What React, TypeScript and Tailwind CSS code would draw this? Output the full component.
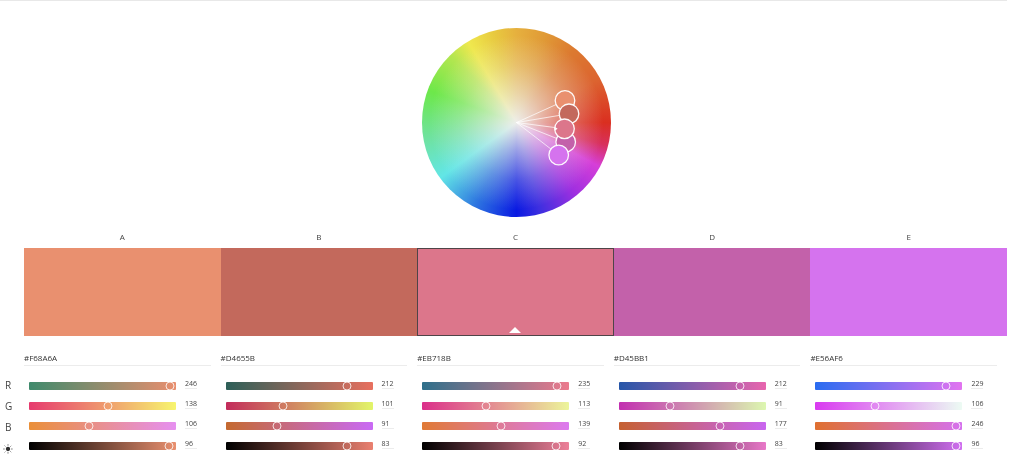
const columns = [
  {
    letter: "A",
    hex: "#F68A6A",
    swatch: "bg-[#e9906f]",
    rows: [
      { value: 246, max: 255, from: "#3f8a6c", to: "#e98f6f" },
      { value: 138, max: 255, from: "#e63a6e", to: "#f7f56e" },
      { value: 106, max: 255, from: "#ea8f38", to: "#e690f0" },
      { value: 96, max: 100, from: "#000000", to: "#e9906f" },
    ],
  },
  {
    letter: "B",
    hex: "#D4655B",
    swatch: "bg-[#c3695c]",
    rows: [
      { value: 212, max: 255, from: "#2d5f58", to: "#e8705f" },
      { value: 101, max: 255, from: "#c22c5b", to: "#e2f56a" },
      { value: 91, max: 255, from: "#c4692f", to: "#c96af5" },
      { value: 83, max: 100, from: "#000000", to: "#ea8070" },
    ],
  },
  {
    letter: "C",
    hex: "#EB718B",
    swatch: "bg-[#dc768b]",
    selected: true,
    rows: [
      { value: 235, max: 255, from: "#2e6f8a", to: "#ec7a8d" },
      { value: 113, max: 255, from: "#db2f8a", to: "#ecf59a" },
      { value: 139, max: 255, from: "#e07a35", to: "#dc7aef" },
      { value: 92, max: 100, from: "#000000", to: "#ed8099" },
    ],
  },
  {
    letter: "D",
    hex: "#D45BB1",
    swatch: "bg-[#c361aa]",
    rows: [
      { value: 212, max: 255, from: "#2656a8", to: "#e865ae" },
      { value: 91, max: 255, from: "#c22fb0", to: "#dcf7b0" },
      { value: 177, max: 255, from: "#c56030", to: "#c966f0" },
      { value: 83, max: 100, from: "#000000", to: "#e878c8" },
    ],
  },
  {
    letter: "E",
    hex: "#E56AF6",
    swatch: "bg-[#d573ee]",
    rows: [
      { value: 229, max: 255, from: "#2a6cf0", to: "#e274f0" },
      { value: 106, max: 255, from: "#d93af0", to: "#ecfbf3" },
      { value: 246, max: 255, from: "#df7030", to: "#d572ee" },
      { value: 96, max: 100, from: "#000000", to: "#d070f0" },
    ],
  },
];

const handles = [
  { x: 143, y: 72.5, fill: "#e9906f" },
  { x: 147, y: 85.8, fill: "#c3695c" },
  { x: 143.7, y: 114, fill: "#c361aa" },
  { x: 142.5, y: 100.8, fill: "#dc768b" },
  { x: 136.7, y: 127, fill: "#d573ee" },
];

function Handles() {
  const c = 94.5;
  return (
    <svg viewBox="0 0 189 189" className="absolute inset-0 h-full w-full">
      {handles.map((h) => (
        <line key={h.fill} x1={c} y1={c} x2={h.x} y2={h.y} stroke="#ffffff" strokeOpacity="0.7" strokeWidth="1" />
      ))}
      {handles.map((h) => (
        <circle
          key={h.fill}
          cx={h.x}
          cy={h.y}
          r="9.8"
          fill={h.fill}
          stroke="#ffffff"
          strokeOpacity="0.95"
          strokeWidth="1.3"
        />
      ))}
      <path d="M132.6 98.8 L135.6 100.8 L132.6 102.8 Z" fill="#ffffff" />
    </svg>
  );
}

function SunIcon() {
  return (
    <svg viewBox="0 0 12 12" className="h-[10px] w-[10px]" fill="none" stroke="#3a3a3a">
      <circle cx="6" cy="6" r="2.6" fill="#2f2f2f" stroke="none" />
      <path
        d="M6 .4v2M6 9.6v2M.4 6h2M9.6 6h2M2 2l1.2 1.2M8.8 8.8L10 10M2 10l1.2-1.2M8.8 3.2L10 2"
        strokeWidth="1"
        strokeDasharray="0.9 0.5"
      />
    </svg>
  );
}

function Slider({ value, max, from, to }: { value: number; max: number; from: string; to: string }) {
  return (
    <div className="flex h-5 items-start pl-[5px]">
      <div
        className="relative h-2 w-[147px] rounded-[1px] shadow-[0_0_0_0.5px_rgba(255,255,255,0.6)]"
        style={{ backgroundImage: `linear-gradient(to right, ${from}, ${to})` }}
      >
        <div
          className="absolute top-1/2 -ml-px h-[9px] w-[9px] -translate-x-1/2 -translate-y-1/2 rounded-full border border-white/80"
          style={{ left: `${(value / max) * 100}%` }}
        />
      </div>
      <div className="ml-[9px] -mt-[2px] h-[9px] w-[12px] border-b border-[#ececec] text-[7px] leading-[8px] text-[#444]">
        {value}
      </div>
    </div>
  );
}

export default function App() {
  return (
    <div className="h-[475px] w-[1024px] overflow-hidden bg-white blur-[0.35px] font-['Open_Sans',sans-serif]">
      <div className="h-px w-[1007px] bg-[#e8e8e8]" />

      <div className="flex w-[1033px] justify-center pt-[27px]">
        <div className="relative h-[189px] w-[189px] rounded-full bg-[conic-gradient(#e6b03e_0deg,#e09a36_18deg,#dc7a30_38deg,#dc6430_62deg,#da2f20_90deg,#d8305c_104deg,#d63fd8_118deg,#a02fe0_140deg,#3e2fe0_165deg,#0a1ae2_180deg,#2d74e0_206deg,#62e6e6_234deg,#6fe2a0_260deg,#6de84a_290deg,#b5e650_316deg,#efe84e_329deg,#e8c93f_346deg,#e6b03e_360deg)]">
          <div className="absolute inset-0 rounded-full bg-[radial-gradient(circle_closest-side,rgba(238,238,234,1)_0%,rgba(238,238,234,0.62)_30%,rgba(238,238,234,0.28)_60%,rgba(238,238,234,0)_92%)]" />
          <Handles />
        </div>
      </div>

      <div className="ml-6 mt-[15px] grid w-[983px] grid-cols-5">
        {columns.map((col) => (
          <div key={col.letter} className="h-[16px] text-center text-[8px] leading-[10px] text-[#444]">
            {col.letter}
          </div>
        ))}
      </div>

      <div className="ml-6 grid h-[88px] w-[983px] grid-cols-5">
        {columns.map((col) => (
          <div
            key={col.letter}
            className={`relative flex items-end justify-center pb-[2px] ${col.swatch} ${
              col.selected ? "border border-[#4f4448]" : ""
            }`}
          >
            {col.selected && (
              <div className="h-0 w-0 border-x-[6px] border-b-[6px] border-x-transparent border-b-white" />
            )}
          </div>
        ))}
      </div>

      <div className="mt-[18px] flex">
        <div className="flex w-6 flex-col pt-[21px] text-[10px] leading-[21px] text-[#444]">
          <div className="h-[21px] pl-[5px]">R</div>
          <div className="h-[21px] pl-[5px]">G</div>
          <div className="h-[21px] pl-[5px]">B</div>
          <div className="flex h-[21px] items-center pl-[3px]">
            <SunIcon />
          </div>
        </div>
        <div className="grid w-[983px] grid-cols-5">
          {columns.map((col) => (
            <div key={col.letter}>
              <div className="mr-[10px] h-[12px] border-b border-[#ececec] text-[8px] leading-[8px] text-[#333]">
                {col.hex}
              </div>
              <div className="pt-[16px]">
                {col.rows.map((row, i) => (
                  <Slider key={i} {...row} />
                ))}
              </div>
            </div>
          ))}
        </div>
      </div>
    </div>
  );
}
